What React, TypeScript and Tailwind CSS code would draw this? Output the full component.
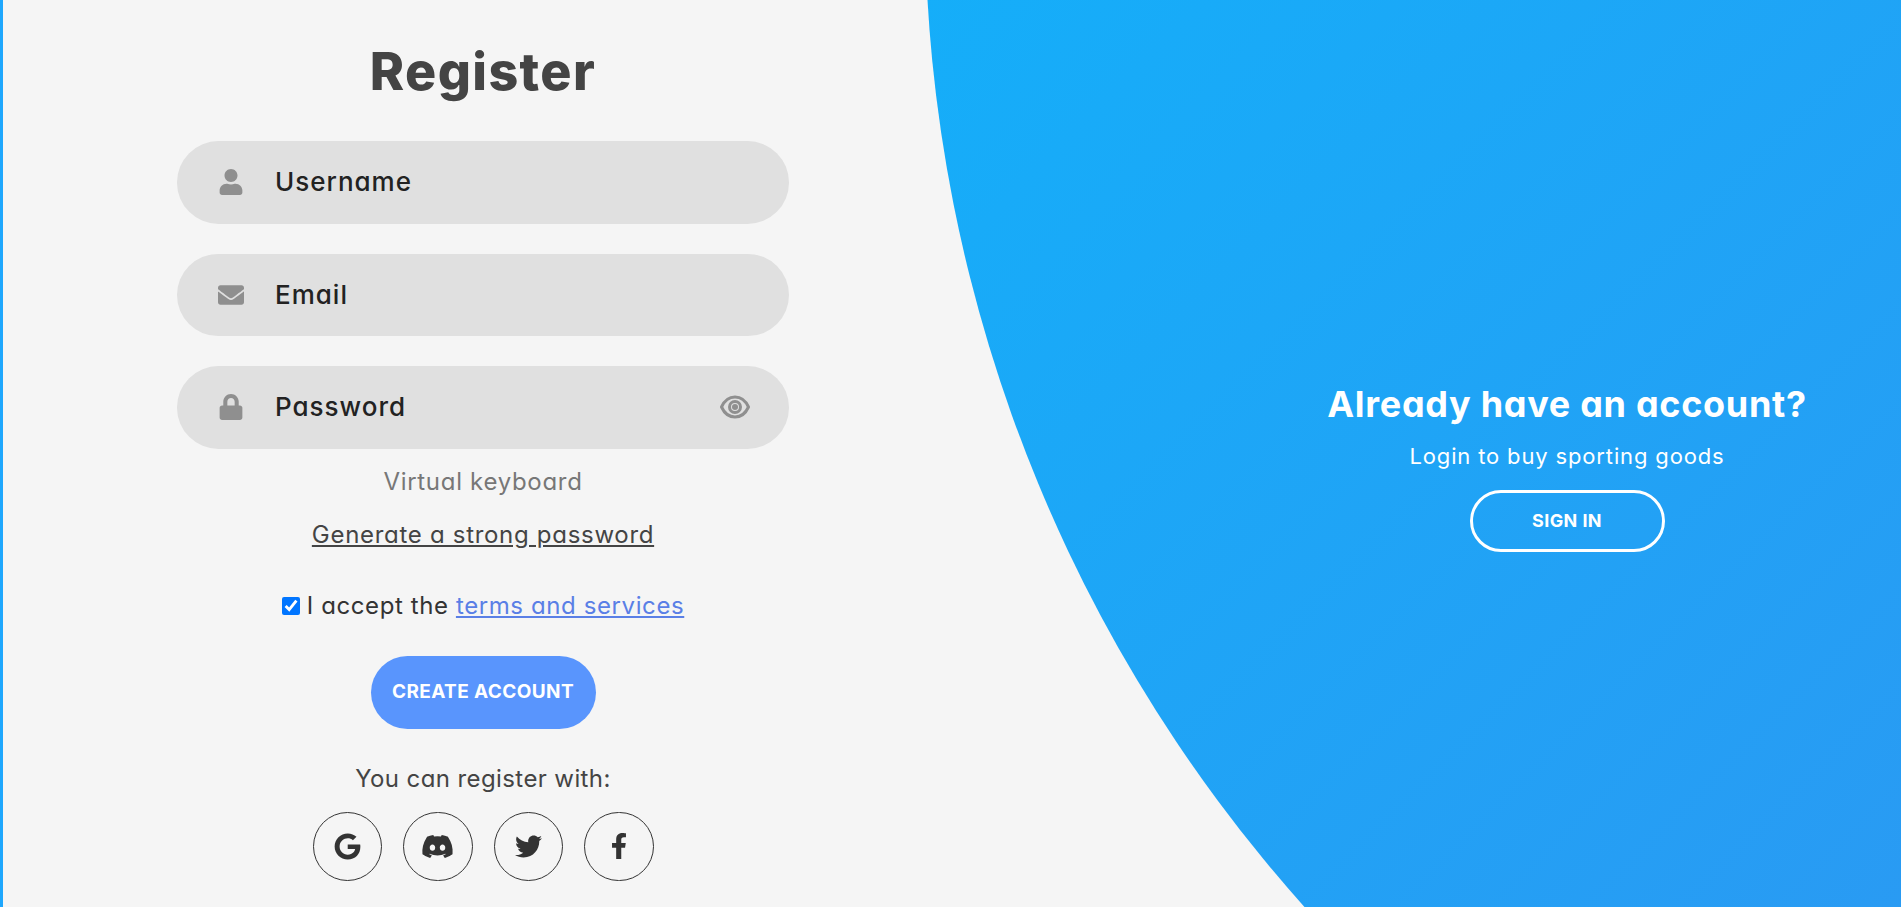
import { FaDiscord, FaEnvelope, FaFacebookF, FaGoogle, FaLock, FaTwitter, FaUser } from "react-icons/fa";

const font = "font-['Inter','Liberation_Sans',sans-serif] [font-feature-settings:'cv11']";

function Field({ label, icon, right }: { label: string; icon: React.ReactNode; right?: React.ReactNode }) {
  return (
    <div className="flex h-[82.5px] w-[612px] items-center rounded-[42px] bg-[#e0e0e0] px-[39px]">
      <div className="flex w-[30px] justify-center text-[#8f8f8f]">{icon}</div>
      <span className="ml-[29px] flex-1 text-[26px] font-medium leading-none tracking-[1px] text-[#222222]">{label}</span>
      {right}
    </div>
  );
}

function Social({ children }: { children: React.ReactNode }) {
  return (
    <a className="flex h-[69.5px] w-[69.5px] items-center justify-center rounded-full border border-[#333333] text-[#333333]">
      {children}
    </a>
  );
}

function EyeIcon() {
  return (
    <svg width="30" height="24" viewBox="0 0 30 24" fill="none" stroke="#8f8f8f" strokeWidth="3" className="shrink-0">
      <path d="M1.500 12C4.500 5.500 9.500 2 15 2S25.500 5.500 28.500 12C25.500 18.500 20.500 22 15 22S4.500 18.500 1.500 12Z" />
      <circle cx="15" cy="12" r="5.500" />
      <circle cx="15" cy="12" r="3" fill="#8f8f8f" stroke="none" />
    </svg>
  );
}

export default function App() {
  return (
    <main className={`relative flex h-[907px] w-full overflow-hidden border-l-[3px] border-[#1ea7fd] bg-[#f5f5f5] ${font}`}>
      <div className="z-10 flex w-[960px] flex-col items-center pt-[40px]">
        <h1 className="text-[52px] font-extrabold leading-[64px] tracking-[1.4px] text-[#444444]">Register</h1>
        <div className="mt-[37px] flex flex-col gap-[30px]">
          <Field label="Username" icon={<FaUser size={26} />} />
          <Field label="Email" icon={<FaEnvelope size={26} />} />
          <Field label="Password" icon={<FaLock size={26} />} right={<EyeIcon />} />
        </div>
        <p className="mt-[16px] text-[24px] leading-[34px] tracking-[0.7px] text-[#777777]">Virtual keyboard</p>
        <a className="mt-[19px] text-[24px] leading-[34px] tracking-[0.7px] text-[#444444] underline">Generate a strong password</a>
        <label className="mt-[37px] flex items-center text-[24px] leading-[34px] tracking-[0.6px] text-[#333333]">
          <input type="checkbox" defaultChecked className="mr-[7px] h-[18px] w-[18px]" />
          <span>
            I accept the <a className="text-[#5a7fe6] underline">terms and services</a>
          </span>
        </label>
        <button className="mt-[33px] h-[73px] w-[225px] rounded-[37px] bg-[#5995fd] pt-[1px] text-[19px] font-bold tracking-[0.4px] text-white">CREATE ACCOUNT</button>
        <p className="mt-[33px] text-[24px] leading-[34px] tracking-[0.4px] text-[#444444]">You can register with:</p>
        <div className="mt-[16px] flex gap-[21px]">
          <Social><FaGoogle size={27} /></Social>
          <Social><FaDiscord size={33} /></Social>
          <Social><FaTwitter size={27} /></Social>
          <Social><FaFacebookF size={26} /></Social>
        </div>
      </div>
      <div className="absolute left-[922px] top-[-1575px] h-[2978px] w-[2978px] rounded-full bg-[linear-gradient(-45deg,#4481eb_0%,#04befe_100%)]" />
      <div className="z-10 ml-[354px] flex w-[500px] flex-col items-center pt-[383px] text-white">
        <h3 className="whitespace-nowrap text-[36px] font-bold leading-[42px] tracking-[0.7px]">Already have an account?</h3>
        <p className="mt-[14px] text-[22px] leading-[34px] tracking-[0.85px]">Login to buy sporting goods</p>
        <button className="mt-[17px] h-[62px] w-[195px] rounded-[31px] border-[3px] border-white pb-[2px] text-[18px] font-bold tracking-[0.4px]">SIGN IN</button>
      </div>
    </main>
  );
}
